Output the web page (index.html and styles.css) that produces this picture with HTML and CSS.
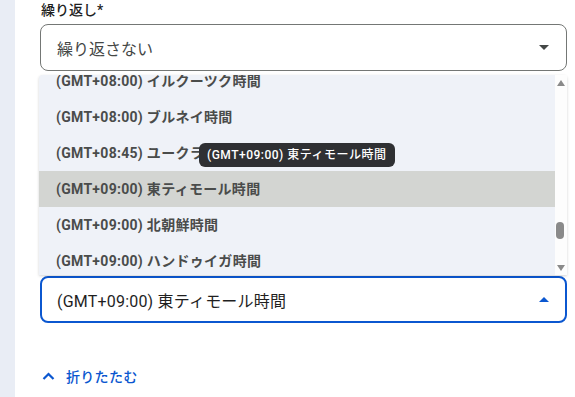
FILE: index.html
```html
<!DOCTYPE html>
<html lang="ja">
<head>
  <meta charset="UTF-8">
  <meta name="viewport" content="width=device-width, initial-scale=1.0">
  <title>繰り返し</title>
  <link rel="stylesheet" href="styles.css">
</head>
<body>
  <div class="rail"></div>

  <div class="main">
    <div class="label">繰り返し*</div>

    <!-- Repeat select -->
    <div class="select">
      <span>繰り返さない</span>
      <span class="caret down"></span>
    </div>

    <!-- Time zone list (open) -->
    <div class="listbox">
      <div class="options">
        <div class="option">(GMT+08:00) イルクーツク時間</div>
        <div class="option">(GMT+08:00) ブルネイ時間</div>
        <div class="option">(GMT+08:45) ユークラ時間</div>
        <div class="option selected">(GMT+09:00) 東ティモール時間</div>
        <div class="option">(GMT+09:00) 北朝鮮時間</div>
        <div class="option">(GMT+09:00) ハンドゥイガ時間</div>
      </div>
      <div class="scrollbar">
        <span class="arrow up"></span>
        <span class="thumb"></span>
        <span class="arrow down"></span>
      </div>
      <div class="tooltip">(GMT+09:00) 東ティモール時間</div>
    </div>

    <div class="select focused">
      <span>(GMT+09:00) 東ティモール時間</span>
      <span class="caret up"></span>
    </div>

    <a class="collapse" href="#">
      <svg width="13" height="8" viewBox="0 0 13 8"><path d="M1.5 7 6.5 2l5 5" fill="none" stroke="#0b57d0" stroke-width="2.2"/></svg>
      折りたたむ
    </a>
  </div>
</body>
</html>
```

FILE: styles.css
```css
/* Page */
body {
  margin: 0;
  height: 397px;
  display: flex;
  font-family: Roboto, "Noto Sans CJK JP", sans-serif;
  color: #1f1f1f;
  background: #fff;
  overflow: hidden;
}

.rail {
  width: 15px;
  flex: none;
  background: #e9edf5;
}

.main {
  width: 527px;
  padding-left: 25px;
}

.label {
  font-size: 14px;
  font-weight: 500;
  line-height: 20px;
  margin: 0 0 4px 1px;
}

/* Select boxes */
.select {
  height: 45px;
  border: 1px solid #747775;
  border-radius: 8px;
  display: flex;
  align-items: center;
  justify-content: space-between;
  padding: 0 16px 0 16px;
  font-size: 16px;
  color: #444746;
}

.select.focused {
  height: 43px;
  border: 2px solid #0b57d0;
  padding: 0 15px;
  color: #1f1f1f;
  letter-spacing: 0.2px;
}

.caret {
  width: 0;
  height: 0;
  border-left: 5px solid transparent;
  border-right: 5px solid transparent;
  margin-right: 1px;
}

.caret.down {
  border-top: 5px solid #444746;
}

.caret.up {
  border-bottom: 5px solid #0b57d0;
}

/* Dropdown list */
.listbox {
  position: relative;
  height: 200px;
  margin: 4px 0 1px -1px;
  display: flex;
  background: #eff2f8;
  border-radius: 4px 4px 0 0;
  box-shadow: 0 1px 3px rgba(0, 0, 0, 0.18);
}

.options {
  flex: 1;
  overflow: hidden;
}

.option {
  height: 36px;
  line-height: 36px;
  padding-left: 17px;
  font-size: 14px;
  font-weight: 700;
  letter-spacing: 0.3px;
  color: #4a4c4b;
  white-space: nowrap;
}

.option:first-child {
  margin-top: -12px;
}

.option.selected {
  background: #d3d5d2;
}

.scrollbar {
  width: 12px;
  flex: none;
  background: #fdfdfd;
  display: flex;
  flex-direction: column;
  align-items: center;
  padding: 5px 0 4px;
  box-sizing: border-box;
}

.arrow {
  width: 0;
  height: 0;
  border-left: 4px solid transparent;
  border-right: 4px solid transparent;
}

.arrow.up {
  border-bottom: 6px solid #8a8a8a;
}

.arrow.down {
  border-top: 6px solid #8a8a8a;
}

.thumb {
  width: 8px;
  height: 17px;
  border-radius: 4px;
  background: #8a8a8a;
  margin: 136px 3px auto 0;
}

.tooltip {
  position: absolute;
  left: 160px;
  top: 68px;
  height: 24px;
  line-height: 24px;
  padding: 0 8px;
  background: #2f3033;
  color: #fff;
  font-size: 12px;
  font-weight: 500;
  letter-spacing: 0.5px;
  border-radius: 6px;
  white-space: nowrap;
}

/* Collapse link */
.collapse {
  display: flex;
  align-items: center;
  gap: 11px;
  margin: 43px 0 0 2px;
  font-size: 14px;
  font-weight: 500;
  color: #0b57d0;
  text-decoration: none;
  letter-spacing: 0.3px;
}
```
